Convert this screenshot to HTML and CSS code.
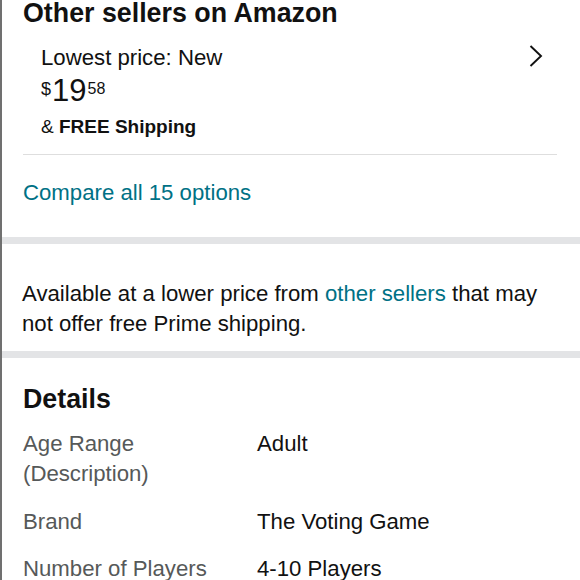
FILE: index.html
```html
<!DOCTYPE html>
<html>
<head>
<meta charset="utf-8">
<link rel="stylesheet" href="styles.css">
</head>
<body>
<div class="page">
  <section class="sellers">
    <h2 class="title">Other sellers on Amazon</h2>
    <div class="offer">
      <div class="offer-info">
        <div class="offer-label">Lowest price: New</div>
        <div class="price"><span class="cur">$</span><span class="whole">19</span><span class="frac">58</span></div>
        <div class="ship">&amp; <b>FREE Shipping</b></div>
      </div>
      <svg class="chev" width="14" height="22" viewBox="0 0 14 22"><path d="M1.5 1 L12 11 L1.5 21" fill="none" stroke="#111" stroke-width="1.9"/></svg>
    </div>
    <div class="compare">Compare all 15 options</div>
  </section>
  <div class="bar"></div>
  <section class="lower">
    <p>Available at a lower price from <span class="link">other sellers</span> that may not offer free Prime shipping.</p>
  </section>
  <div class="bar"></div>
  <section class="details">
    <h2 class="title">Details</h2>
    <div class="grid">
      <div class="k">Age Range (Description)</div><div class="v">Adult</div>
      <div class="k">Brand</div><div class="v">The Voting Game</div>
      <div class="k">Number of Players</div><div class="v">4-10 Players</div>
    </div>
  </section>
</div>
</body>
</html>
```
FILE: styles.css
```css
html, body { margin: 0; padding: 0; background: #fff; }
body { font-family: "Liberation Sans", Arial, sans-serif; color: #111; }
.page { border-left: 2px solid #707070; min-height: 580px; box-sizing: border-box; }
.title { font-size: 26.8px; font-weight: bold; margin: 0; line-height: 30px; }
.sellers { padding: 0 23px 0 21px; margin-top: -2px; }
.offer { display: flex; justify-content: space-between; align-items: flex-start; padding: 17px 0 16px 18px; border-bottom: 1px solid #dedede; }
.offer-label { font-size: 22.2px; line-height: 26px; }
.price { display: flex; align-items: flex-start; margin-top: 3px; height: 34px; }
.cur { font-size: 18px; line-height: 18px; margin-top: 6px; margin-right: 1px; }
.whole { font-size: 31px; line-height: 34px; }
.frac { font-size: 16px; line-height: 16px; margin-top: 7px; margin-left: 1px; }
.ship { font-size: 19px; line-height: 22px; margin-top: 8px; }
.chev { margin: 0 14px 0 0; }
.compare { color: #007185; font-size: 22.2px; line-height: 26px; padding: 25px 0 31px; }
.bar { height: 7px; background: #e3e4e6; }
.lower { padding: 35px 22px 12px 20px; }
.lower p { margin: 0; font-size: 22.2px; line-height: 30px; }
.link { color: #007185; }
.details { padding: 26px 22px 0 21px; }
.grid { display: grid; grid-template-columns: 200px 1fr; column-gap: 34px; row-gap: 17.5px; margin-top: 15px; font-size: 22.2px; line-height: 30px; }
.k { color: #565959; }
.v { color: #111; }
```
